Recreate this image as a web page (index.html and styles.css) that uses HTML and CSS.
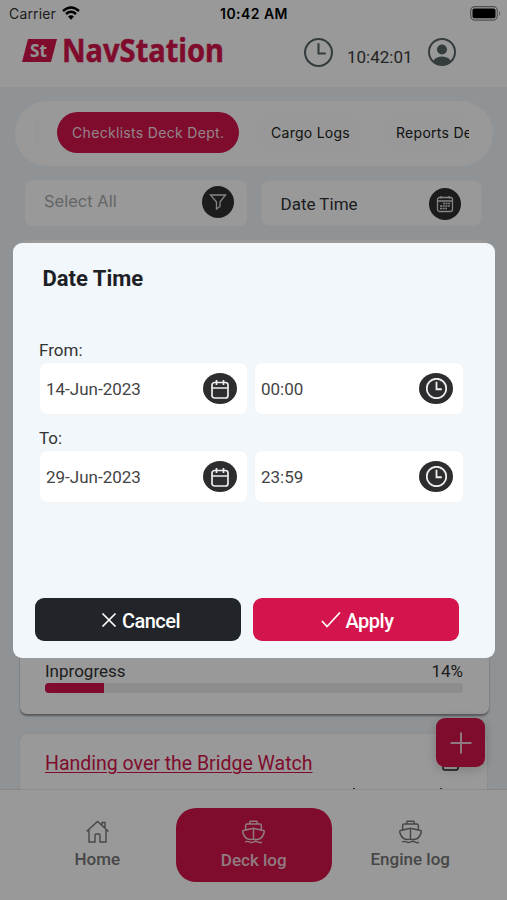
FILE: index.html
```html
<!DOCTYPE html>
<html lang="en">
<head>
<meta charset="utf-8">
<title>NavStation</title>
<link rel="stylesheet" href="styles.css">
</head>
<body>
<svg class="defs" width="0" height="0">
  <symbol id="ship" viewBox="0 0 22 22"><path d="M7.500 3.200V1.500q0-.7.700-.7h5.600q.7 0 .7.700v1.700M3.500 8.500V4.800q0-1.500 1.500-1.500h12q1.500 0 1.500 1.500v3.700M11 7.500v10.500M11 7.500L1.500 9.500q-1 .3-.8 1.300.6 4 4 6.700M11 7.500l9.500 2q1 .3.800 1.300-.6 4-4 6.700M4.700 17.500q3 1.300 6.300.3 3.300 1 6.300-.3M3 20.800q2-1.500 4-.3t4 0q2-1.200 4 0t4 .3"/></symbol>
  <symbol id="calendar" viewBox="0 0 18 20"><rect x="1" y="3.500" width="16" height="15.500" rx="2.500"/><path d="M1 9h16M5.500 1v5M12.500 1v5"/></symbol>
  <symbol id="clock" viewBox="0 0 28 28"><circle cx="14" cy="14" r="13"/><path d="M14 5v10h7"/></symbol>
</svg>
<div class="app">
  <div class="status">
    <div class="carrier"><span>Carrier</span>
      <svg width="18" height="14" viewBox="0 0 18 14"><path d="M1 5Q9-2 17 5M4 8q5-4.300 10 0" fill="none" stroke="#000" stroke-width="2.400"/><path d="M6 10.500q3-2.400 6 0L9 13.700z"/></svg>
    </div>
    <b class="time">10:42 AM</b>
    <svg class="battery" width="32" height="15" viewBox="0 0 32 15"><rect x=".7" y=".7" width="26.600" height="13.400" rx="4" fill="none" stroke="#888" stroke-width="1.200"/><rect x="2.500" y="2.500" width="23" height="9.800" rx="2"/><path d="M29 5q2 2.400 0 5z" fill="#888"/></svg>
  </div>
  <header class="header">
    <svg class="logo" width="220" height="44" viewBox="0 0 220 44">
      <path d="M6 6h29l-6 23H0z" fill="#d4144c"/>
      <text class="logo-mark" x="8" y="23.500" textLength="17" lengthAdjust="spacingAndGlyphs">St</text>
      <text class="logo-name" x="40" y="29.300" textLength="162" lengthAdjust="spacingAndGlyphs">NavStation</text>
    </svg>
    <div class="header-info">
      <svg class="line" width="29" height="29"><use href="#clock"/></svg>
      <span class="clock-text">10:42:01</span>
      <svg width="28" height="28" viewBox="0 0 28 28"><defs><clipPath id="c"><circle cx="14" cy="14" r="13"/></clipPath></defs><circle cx="14" cy="14" r="13" fill="none" stroke="#596468" stroke-width="2"/><g fill="#596468" clip-path="url(#c)"><circle cx="14" cy="11.500" r="5"/><ellipse cx="14" cy="24.500" rx="9" ry="6"/></g></svg>
    </div>
  </header>
  <main class="content">
    <div class="tabs"><div class="tabs-scroll">
      <span class="tab-edge"></span>
      <span class="tab tab-active">Checklists Deck Dept.</span>
      <span class="tab">Cargo Logs</span>
      <span class="tab tab-last">Reports Deck</span>
    </div></div>
    <div class="filters">
      <div class="filter filter-all"><span>Select All</span><i class="round"><svg width="18" height="18" viewBox="0 0 18 18"><path d="M1.500 2h15L11 9v4.500L7.500 16V9z"/></svg></i></div>
      <div class="filter filter-date"><span>Date Time</span><i class="round"><svg width="18" height="18" viewBox="0 0 18 18"><rect x="1.500" y="2.500" width="15" height="14" rx="2"/><path d="M1.500 6h15M5 1v2.500M13 1v2.500"/><path d="M7 8.500h7.500M4 11h10M4 13.500h7" stroke-width="1.700" stroke-dasharray="2 .6"/></svg></i></div>
    </div>
    <article class="card card-progress">
      <div class="progress-label"><span>Inprogress</span><span>14%</span></div>
      <div class="track"><div class="fill" style="width:14%"></div></div>
    </article>
    <article class="card card-next">
      <a class="card-title">Handing over the Bridge Watch</a>
      <svg class="card-icon" width="18" height="22" viewBox="0 0 18 22"><rect x="1" y="1" width="15" height="20" rx="2" fill="none" stroke="#222" stroke-width="1.500"/></svg>
      <span class="dots"><i></i><i></i></span>
    </article>
  </main>
  <nav class="nav">
    <div class="nav-item"><svg width="25" height="24" viewBox="0 0 25 24"><path d="M1.500 11.500L12.500 1.500l11 10M4 10v12h6v-7q0-1 1-1h3q1 0 1 1v7h6V10M17 5V2.500h3V8.500"/></svg><span>Home</span></div>
    <div class="nav-item nav-active"><svg width="23" height="23"><use href="#ship"/></svg><span>Deck log</span></div>
    <div class="nav-item"><svg width="23" height="23"><use href="#ship"/></svg><span>Engine log</span></div>
  </nav>
  <div class="fab"><svg width="24" height="24" viewBox="0 0 24 24"><path d="M12 1.500v21M1.500 12h21"/></svg></div>
</div>
<div class="backdrop">
  <section class="modal">
    <h2>Date Time</h2>
    <label>From:</label>
    <div class="fields">
      <div class="field"><span>14-Jun-2023</span><i class="oval"><svg width="18" height="20"><use href="#calendar"/></svg></i></div>
      <div class="field"><span>00:00</span><i class="oval oval-clock"><svg width="21" height="21"><use href="#clock"/></svg></i></div>
    </div>
    <label>To:</label>
    <div class="fields">
      <div class="field"><span>29-Jun-2023</span><i class="oval"><svg width="18" height="20"><use href="#calendar"/></svg></i></div>
      <div class="field"><span>23:59</span><i class="oval oval-clock"><svg width="21" height="21"><use href="#clock"/></svg></i></div>
    </div>
    <div class="actions">
      <button class="btn cancel"><svg width="16" height="16" viewBox="0 0 16 16"><path d="M1.500 1.500l13 13M14.500 1.500l-13 13"/></svg><span>Cancel</span></button>
      <button class="btn apply"><svg width="20" height="18" viewBox="0 0 20 18"><path d="M1 10l5 5.500L19 1.500"/></svg><span>Apply</span></button>
    </div>
  </section>
</div>
</body>
</html>
```
FILE: styles.css
```css
* { box-sizing: border-box; }
body { margin: 0; font-family: Roboto, "Liberation Sans", sans-serif; }
svg { display: block; flex: none; }
i { font-style: normal; }
.defs { position: absolute; }
.app { position: relative; width: 507px; height: 900px; overflow: hidden; display: flex; flex-direction: column; background: #f1f5f8; }

.status { height: 28px; flex: none; display: grid; grid-template-columns: 1fr auto 1fr; align-items: center; padding: 0 5px 2px 6px; background: #fff; font-family: Inter, sans-serif; font-size: 14px; color: #111; }
.carrier { display: flex; align-items: center; gap: 6px; padding-left: 3px; letter-spacing: .15px; color: #333; }
.time { font-weight: 600; color: #000; font-size: 14px; letter-spacing: .45px; }
.battery { justify-self: end; }

.header { height: 59px; flex: none; display: flex; justify-content: space-between; padding: 5px 51px 0 22px; background: #fff; }
.logo-mark { font: bold 17px "Noto Sans", sans-serif; fill: #f4f4f4; }
.logo-name { font: bold 32px "Noto Sans", sans-serif; fill: #d4144c; stroke: #d4144c; stroke-width: .5px; }
.header-info { display: flex; align-items: flex-start; padding-top: 5px; }
.clock-text { margin: 8px 16px 0 14px; font-size: 17px; line-height: 22px; color: #3c3c3c; width: 65px; white-space: nowrap; }
.line { fill: none; stroke: #596468; stroke-width: 2; }

.content { flex: 1; min-height: 0; overflow: hidden; padding-top: 14px; }
.tabs { margin: 0 14px 0 15px; height: 65px; border-radius: 33px; background: #fff; padding: 11px 24px 0 20px; }
.tabs-scroll { display: flex; overflow: hidden; height: 42px; }
.tab-edge { width: 5px; margin: 9px 17px 0 0; height: 24px; background: #fafafa; flex: none; }
.tab { flex: none; height: 41px; line-height: 41px; border-radius: 21px; font-family: Inter, sans-serif; font-size: 14px; letter-spacing: .27px; color: #222; padding: 0 15px; background: #fdfdfd; margin-right: 18px; white-space: nowrap; }
.tab-active { background: #d4144c; color: #f4dce3; width: 182px; margin-right: 17px; letter-spacing: .32px; }
.tab-last { margin-left: -2px; }
.filters { display: flex; gap: 14px; padding: 14px 25px 0 25px; }
.filter { height: 46px; border-radius: 8px; background: #fff; display: flex; align-items: center; justify-content: space-between; }
.filter-all { width: 223px; padding: 0 13px 3px 19px; font-family: Inter, sans-serif; font-size: 16.500px; color: #aaa; }
.filter-all span { margin-top: -2px; }
.filter-date { width: 221px; padding: 1px 20px 0 18px; color: #303236; font-size: 17px; border: 1px solid #f6f8fa; }
.round { width: 32px; height: 32px; border-radius: 50%; background: #303030; display: grid; place-items: center; }
.round svg { fill: none; stroke: #ddd; stroke-width: 1.300; }
.card { background: #fff; width: 469px; margin-left: 20px; border-radius: 7px; box-shadow: 0 2px 2px rgba(0,0,0,.4); }
.card-progress { height: 474px; margin-top: 14px; padding: 421px 26px 0 25px; }
.progress-label { display: flex; justify-content: space-between; font-size: 17px; line-height: 20px; color: #333; }
.track { height: 10px; margin-top: 2px; border-radius: 4px; background: #ececec; overflow: hidden; }
.fill { height: 10px; background: #d4144c; }
.card-next { display: grid; grid-template-columns: 1fr auto; width: 467px; height: 120px; margin-top: 20px; padding: 18px 29px 0 25px; box-shadow: 0 0 2px rgba(0,0,0,.12); align-content: start; }
.card-title { font-size: 19.500px; line-height: 24px; color: #d4144c; text-decoration: underline; text-decoration-thickness: 1px; text-underline-offset: 2px; }
.card-icon { margin-top: -3px; }
.dots { display: flex; gap: 85px; padding: 12px 0 0 308px; }
.dots i { width: 2px; height: 1px; background: #555; }

.nav { height: 110px; flex: none; display: flex; padding: 18px 18px 0 19px; background: #fff; box-shadow: 0 -1px 1px rgba(0,0,0,.08); z-index: 1; }
.nav-item { width: 156.500px; height: 74px; border-radius: 20px; display: flex; flex-direction: column; align-items: center; padding-top: 12px; font-size: 17px; font-weight: 500; color: #777; }
.nav-item svg { fill: none; stroke: currentColor; stroke-width: 1.400; height: 24px; }
.nav-item span { line-height: 20px; margin-top: 5px; }
.nav-active { background: #d4144c; color: #f2cbd6; }
.nav-active span { margin-top: 6px; }
.fab { position: absolute; left: 436px; top: 718px; width: 49px; height: 49px; border-radius: 9px; background: #d4144c; box-shadow: 0 2px 12px rgba(0,0,0,.2); display: grid; place-items: center; z-index: 2; }
.fab svg { fill: none; stroke: #edcbd5; stroke-width: 2; }

.backdrop { position: fixed; inset: 0; z-index: 5; background: rgba(0,0,0,.4); padding: 243px 12px 0 13px; }
.modal { height: 415px; border-radius: 9px; background: #f1f7fa; padding: 22px 31px 0 26px; color: #333; }
.modal h2 { margin: 0 0 50px 3.500px; font-size: 22px; line-height: 27px; font-weight: 700; color: #1d2126; }
.modal label { display: block; height: 20px; line-height: 17px; font-size: 17px; }
.fields { display: grid; grid-template-columns: 209px 209px; gap: 7px; margin-bottom: 15px; }
.field { height: 53px; border: 1px solid #f2f4f5; border-radius: 8px; background: #fff; display: flex; align-items: center; justify-content: space-between; padding: 0 10px 0 6px; font-size: 17px; color: #444; }
.field:last-child { margin-left: -1px; }
.oval { width: 34px; height: 31px; border-radius: 50%; background: #2d2d2f; display: grid; place-items: center; }
.oval svg { fill: none; stroke: #eee; stroke-width: 1.700; }
.oval-clock svg { stroke-width: 2.400; }
.actions { display: flex; gap: 12px; margin: 95px 0 0 -4px; }
.btn { width: 206px; height: 43px; border: 0; border-radius: 9px; padding: 2px 0 0; display: flex; align-items: center; justify-content: center; gap: 5px; font: 500 20px Roboto, sans-serif; letter-spacing: -.5px; color: #fff; flex: none; }
.btn svg { fill: none; stroke: #fff; stroke-width: 1.700; margin-top: -2px; }
.cancel { background: #212429; padding-left: 5px; }
.apply { background: #d4144c; padding-left: 2px; }
```
